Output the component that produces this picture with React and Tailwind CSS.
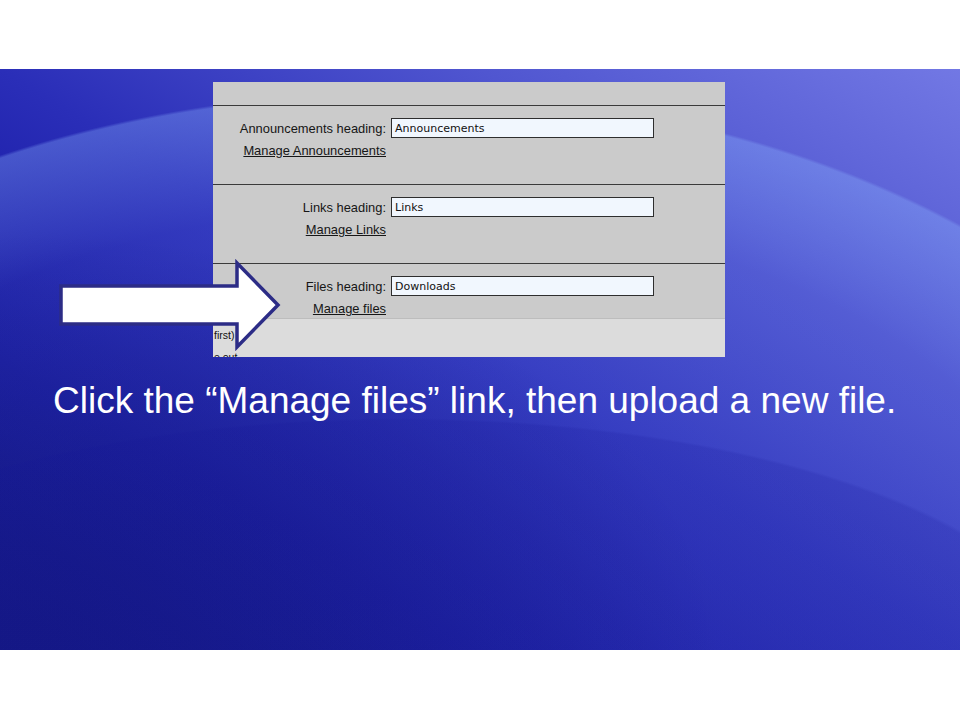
import React from 'react';

const sections = [
  { label: 'Announcements heading:', value: 'Announcements', link: 'Manage Announcements' },
  { label: 'Links heading:', value: 'Links', link: 'Manage Links' },
];

function SettingRow({ label, value, link }) {
  return (
    <div className="pt-[12px]">
      <div className="flex items-center">
        <span className="w-[173px] text-right text-[12.9px] leading-[15px] text-[#161616]">{label}</span>
        <div className="ml-[5px] w-[263px] h-[20px] border border-[#2e2e2e] bg-[#f1f7fe] pl-[3px] pt-[2px] flex items-center font-['DejaVu_Sans',sans-serif] text-[11px] text-[#111]">
          {value}
        </div>
      </div>
      <div className="mt-[5px] w-[173px] text-right text-[12.9px] leading-[15px]">
        <a className="underline text-[#161616]">{link}</a>
      </div>
    </div>
  );
}

export default function App() {
  return (
    <div className="w-[960px] h-[720px] bg-white flex flex-col font-['Liberation_Sans',Arial,sans-serif]">
      <div className="h-[69px] shrink-0" />
      <div className="relative h-[581px] shrink-0 overflow-hidden bg-[radial-gradient(ellipse_673px_251px_at_400px_600px,rgba(20,20,150,0.16)_99%,rgba(20,20,150,0)_100%),radial-gradient(ellipse_879px_577px_at_400px_600px,rgba(130,160,255,0.13)_0%,rgba(130,160,255,0.13)_80%,rgba(140,180,255,0.34)_99.5%,rgba(140,180,255,0)_100%),radial-gradient(ellipse_720px_420px_at_0px_581px,rgba(4,4,112,0.95)_0%,rgba(4,4,112,0.5)_45%,rgba(4,4,112,0)_100%),linear-gradient(to_top_right,#05057a_0%,#12129e_25%,#2a2eb8_50%,#5056d0_75%,#7278e4_100%)]">
        <div className="ml-[213px] mt-[13px] w-[512px] h-[275px] bg-[#cbcbcb] flex flex-col overflow-hidden">
          <div className="h-[24px] shrink-0 border-b border-[#3a3a3a]" />
          {sections.map((s) => (
            <div key={s.label} className="h-[79px] shrink-0 border-b border-[#3a3a3a]">
              <SettingRow {...s} />
            </div>
          ))}
          <div className="h-[54px] shrink-0">
            <SettingRow label="Files heading:" value="Downloads" link="Manage files" />
          </div>
          <div className="flex-1 border-t border-[#bdbdbd] bg-[#dcdcdc] pl-[1px] pt-[5px] text-[10.5px] leading-[22px] text-[#111]">
            <div>first)</div>
            <div>e out</div>
          </div>
        </div>

        <div className="pl-[53px] mt-[23px] text-[37px] leading-[42px] text-white whitespace-pre">
          Click the “Manage files” link, then upload a new file.
        </div>

        <svg className="absolute left-0 top-0" width="960" height="581" viewBox="0 0 960 581">
          <polygon
            points="61,217 237,217 237,194 278,236 237,278 237,255 61,255"
            fill="#ffffff"
            stroke="#2c2c86"
            strokeWidth="3.5"
            strokeLinejoin="miter"
          />
        </svg>
      </div>
      <div className="flex-1" />
    </div>
  );
}
